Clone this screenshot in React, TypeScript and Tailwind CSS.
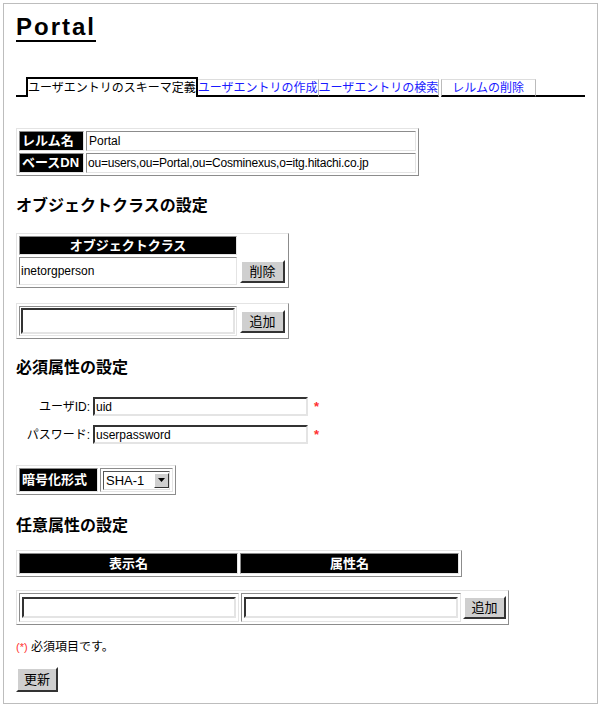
import React from 'react'

const font = { fontFamily: '"Liberation Sans", "Noto Sans CJK JP", sans-serif' }

function Tbl({ children, className = '' }: any) {
  return (
    <div className={`inline-flex flex-col gap-[2px] border border-t-[#e4e4e4] border-l-[#e4e4e4] border-r-[#8c8c8c] border-b-[#8c8c8c] p-[2px] ${className}`}>
      {children}
    </div>
  )
}

function Cell({ children, className = '' }: any) {
  return (
    <div className={`flex items-center border border-t-[#8c8c8c] border-l-[#8c8c8c] border-r-[#e4e4e4] border-b-[#e4e4e4] ${className}`}>
      {children}
    </div>
  )
}

function Btn({ children, className = '' }: any) {
  return (
    <button className={`flex h-[23px] items-center justify-center border-2 border-t-white border-l-white border-r-[#333] border-b-[#333] bg-[#cfcfcf] px-[5px] text-[13px] leading-none text-black ${className}`}>
      {children}
    </button>
  )
}

function Input({ value = '', className = '' }: any) {
  return (
    <div className={`flex items-center border-2 border-t-[#333] border-l-[#333] border-r-[#e4e4e4] border-b-[#e4e4e4] bg-white px-[1px] text-[12px] leading-none ${className}`}>
      {value}
    </div>
  )
}

function Heading({ children, className = '' }: any) {
  return <h2 className={`text-[16px] font-bold leading-[20px] text-black ${className}`}>{children}</h2>
}

export default function App() {
  const tabs = ['ユーザエントリの作成', 'ユーザエントリの検索']

  return (
    <div className="h-[707px] w-[601px] bg-white pt-[3px] pl-[3px]" style={font}>
      <div className="flex h-[701px] w-[595px] flex-col border border-[#bdbdbd] pl-[12px] text-[12px] text-black">
        <h1 className="mt-[9px] text-[24px] font-bold leading-[28px] tracking-[2px]">
          <span className="border-b-2 border-black">Portal</span>
        </h1>

        <div className="mt-[36px] flex h-[20px] w-[569px] items-end">
          <div className="h-[2px] w-[10px] bg-black" />
          <div className="flex h-[20px] items-center border-x-2 border-t-2 border-black bg-white leading-none">
            ユーザエントリのスキーマ定義
          </div>
          {tabs.map((t) => (
            <div key={t} className="flex h-[18px] items-center border-b-2 border-b-black border-t border-t-[#ddd] border-r border-r-[#bbb] leading-none text-[#1a1aff]">
              {t}
            </div>
          ))}
          <div className="ml-[2px] flex h-[18px] w-[95px] items-center border-b-2 border-b-black border-t border-t-[#ddd] border-x border-x-[#bbb] pl-[10px] leading-none text-[#1a1aff]">
            レルムの削除
          </div>
          <div className="h-[2px] flex-1 bg-black" />
        </div>

        <Tbl className="mt-[31px] w-[403px]">
          <div className="flex gap-[2px]">
            <Cell className="h-[20px] w-[65px] bg-black px-[2px] text-[13px] font-bold text-white">レルム名</Cell>
            <Cell className="h-[20px] flex-1 px-[2px]">Portal</Cell>
          </div>
          <div className="flex gap-[2px]">
            <Cell className="h-[20px] w-[65px] bg-black px-[2px] text-[13px] font-bold text-white">ベースDN</Cell>
            <Cell className="h-[20px] flex-1 px-[1px] tracking-[-0.2px]">ou=users,ou=Portal,ou=Cosminexus,o=itg.hitachi.co.jp</Cell>
          </div>
        </Tbl>

        <Heading className="mt-[20px]">オブジェクトクラスの設定</Heading>

        <Tbl className="mt-[17px] w-[273px]">
          <div className="flex gap-[2px]">
            <Cell className="h-[19px] w-[218px] justify-center bg-black text-[13px] font-bold text-white">オブジェクトクラス</Cell>
          </div>
          <div className="flex gap-[2px]">
            <Cell className="h-[28px] w-[218px] px-[1px]">inetorgperson</Cell>
            <div className="flex flex-1 items-center justify-center">
              <Btn className="w-[45px]">削除</Btn>
            </div>
          </div>
        </Tbl>

        <Tbl className="mt-[15px] w-[273px]">
          <div className="flex gap-[2px]">
            <Cell className="h-[30px] w-[218px] p-[1px]">
              <Input className="h-[26px] w-full" />
            </Cell>
            <div className="flex flex-1 items-center justify-center">
              <Btn className="w-[45px]">追加</Btn>
            </div>
          </div>
        </Tbl>

        <Heading className="mt-[19px]">必須属性の設定</Heading>

        <div className="mt-[19px] flex flex-col gap-[9px]">
          <div className="flex items-center">
            <span className="w-[77px] pr-[3px] text-right">ユーザID:</span>
            <Input value="uid" className="h-[19px] w-[215px]" />
            <span className="ml-[6px] text-[13px] font-bold leading-none text-[#ff3030]">*</span>
          </div>
          <div className="flex items-center">
            <span className="w-[77px] pr-[3px] text-right">パスワード:</span>
            <Input value="userpassword" className="h-[19px] w-[215px]" />
            <span className="ml-[6px] text-[13px] font-bold leading-none text-[#ff3030]">*</span>
          </div>
        </div>

        <Tbl className="mt-[21px] w-[160px]">
          <div className="flex gap-[2px]">
            <Cell className="h-[24px] w-[79px] bg-black px-[2px] text-[13px] font-bold text-white">暗号化形式</Cell>
            <Cell className="h-[24px] flex-1 px-[2px]">
              <div className="flex h-[19px] w-[67px] items-center border border-t-[#555] border-l-[#555] border-r-[#ddd] border-b-[#ddd] bg-white">
                <span className="flex-1 pl-[2px] text-[13px] leading-none">SHA-1</span>
                <span className="flex h-[15px] w-[15px] items-center justify-center border border-t-white border-l-white border-r-[#333] border-b-[#333] bg-[#cfcfcf]">
                  <svg width="7" height="4" viewBox="0 0 7 4"><path d="M0 0h7L3.5 4z" fill="#000" /></svg>
                </span>
              </div>
            </Cell>
          </div>
        </Tbl>

        <Heading className="mt-[21px]">任意属性の設定</Heading>

        <Tbl className="mt-[14px] w-[446px]">
          <div className="flex gap-[2px]">
            <Cell className="h-[21px] flex-1 justify-center bg-black text-[13px] font-bold text-white">表示名</Cell>
            <Cell className="h-[21px] flex-1 justify-center bg-black text-[13px] font-bold text-white">属性名</Cell>
          </div>
        </Tbl>

        <Tbl className="mt-[13px] w-[493px]">
          <div className="flex gap-[2px]">
            <Cell className="h-[29px] w-[220px] p-[2px]">
              <Input className="h-[21px] w-full" />
            </Cell>
            <Cell className="h-[29px] w-[220px] p-[2px]">
              <Input className="h-[21px] w-full" />
            </Cell>
            <div className="flex flex-1 items-center justify-center">
              <Btn className="w-[43px]">追加</Btn>
            </div>
          </div>
        </Tbl>

        <p className="mt-[14px] text-[12px] leading-[16px]">
          <span className="text-[11px] text-[#ff3030]">(*)</span> 必須項目です。
        </p>

        <Btn className="mt-[12px] h-[25px] w-[42px]">更新</Btn>
      </div>
    </div>
  )
}
